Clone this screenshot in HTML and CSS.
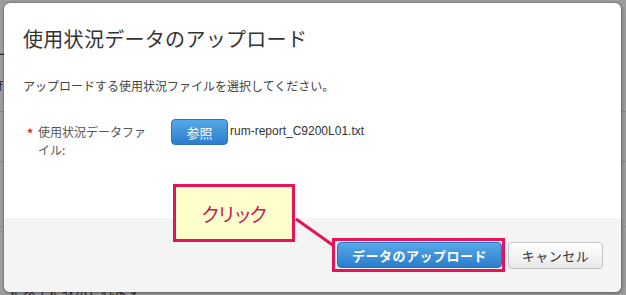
FILE: index.html
```html
<!DOCTYPE html>
<html lang="ja">
<head>
  <meta charset="UTF-8" />
  <title>使用状況データのアップロード</title>
  <link rel="stylesheet" href="styles.css">
</head>
<body>
  <div class="page">
    <div class="page-row first">
      <span class="page-text">ー</span>
      <span class="page-text">ff</span>
    </div>
    <div class="page-row"></div>
    <div class="page-row tall"></div>
    <div class="page-foot">に以下に表示されます</div>
  </div>

  <div class="modal">
    <div class="modal-body">
      <h2 class="modal-title">使用状況データのアップロード</h2>
      <p class="modal-desc">アップロードする使用状況ファイルを選択してください。</p>

      <div class="field">
        <label class="field-label">
          <span class="req">*</span>
          <span class="field-text">使用状況データファイル:</span>
        </label>
        <div class="field-input">
          <button class="btn btn-primary btn-browse">参照</button>
          <span class="file-name">rum-report_C9200L01.txt</span>
        </div>
      </div>
    </div>

    <div class="modal-footer">
      <span class="highlight">
        <button class="btn btn-primary btn-upload">データのアップロード</button>
      </span>
      <button class="btn btn-default">キャンセル</button>
    </div>

    <!-- 注釈 -->
    <svg class="callout-line" width="50" height="40" viewBox="0 0 50 40">
      <line x1="2" y1="3" x2="40" y2="30" stroke="#e5135c" stroke-width="3" />
    </svg>
    <div class="callout">クリック</div>
  </div>
</body>
</html>
```

FILE: styles.css
```css
body {
  margin: 0;
  background: #9d9d9d;
  font-family: "Noto Sans CJK JP", sans-serif;
  width: 626px;
  height: 295px;
  overflow: hidden;
  position: relative;
}
.page {
  height: 295px;
  overflow: hidden;
}
.page-row {
  height: 49px;
  border-bottom: 1px solid #8a8a8a;
  color: #2a2a2a;
  font-size: 13px;
}
.page-row.first {
  height: 112px;
  display: flex;
  flex-direction: column;
  padding-top: 38px;
  box-sizing: border-box;
  line-height: 32px;
}
.page-row.tall {
  height: 64px;
}
.page-text {
  margin-left: -6px;
}
.page-foot {
  color: #2a2a2a;
  font-size: 13px;
  line-height: 16px;
  padding: 55px 0 0 10px;
}
.modal {
  position: absolute;
  left: 4px;
  top: 3px;
  width: 617px;
  height: 289px;
  background: #fff;
  border-radius: 6px;
  box-shadow: 0 0 2px rgba(0,0,0,0.5), 1px 2px 4px rgba(0,0,0,0.25);
  display: flex;
  flex-direction: column;
  overflow: hidden;
}
.modal-body {
  height: 215px;
  padding: 22px 19px 0;
  box-sizing: border-box;
}
.modal-title {
  margin: 0;
  font-size: 20px;
  font-weight: normal;
  line-height: 28px;
  color: #333;
  letter-spacing: 0.3px;
}
.modal-desc {
  margin: 24px 0 0;
  font-size: 12px;
  line-height: 18px;
  color: #444;
}
.field {
  display: flex;
  margin-top: 25px;
  padding-left: 4px;
}
.field-label {
  display: flex;
  width: 144px;
  font-size: 12px;
  line-height: 18px;
  color: #555;
}
.req {
  color: #d42a1c;
  width: 11px;
  font-weight: bold;
  margin-top: 4px;
}
.field-text {
  width: 112px;
  margin-top: 3px;
}
.field-input {
  display: flex;
  align-items: flex-start;
  margin-top: -1px;
}
.btn {
  font-family: "Noto Sans CJK JP", sans-serif;
  font-size: 13px;
  height: 26px;
  border-radius: 4px;
  padding: 0;
  cursor: pointer;
  box-sizing: border-box;
}
.btn-primary {
  color: #fff;
  background: linear-gradient(#55a8e8, #2b7dcc);
  border: 1px solid #2f74bb;
}
.btn-browse {
  width: 57px;
}
.file-name {
  font-family: "Liberation Sans", Arial, sans-serif;
  font-size: 12px;
  color: #333;
  margin-left: 2px;
  line-height: 18px;
  margin-top: 3px;
}
.modal-footer {
  flex: 1;
  background: #f4f4f4;
  display: flex;
  justify-content: flex-end;
  align-items: flex-start;
  padding: 20px 18px 0 0;
}
.highlight {
  display: inline-flex;
  border: 3px solid #e5135c;
  padding: 1px 0 1px 2px;
}
.btn-upload {
  width: 165px;
  font-weight: bold;
  letter-spacing: 0.5px;
}
.btn-default {
  width: 95px;
  height: 27px;
  margin: 4px 0 0 3px;
  color: #333;
  background: linear-gradient(#ffffff, #e9e9e9);
  border: 1px solid #c4c4c4;
  letter-spacing: 0.5px;
}
.callout {
  position: absolute;
  left: 169px;
  top: 181px;
  width: 122px;
  height: 58px;
  box-sizing: border-box;
  border: 3px solid #e5135c;
  background: #ffffcc;
  color: #c8175a;
  font-size: 19px;
  letter-spacing: -3px;
  display: flex;
  align-items: center;
  justify-content: center;
  padding-right: 2px;
}
.callout-line {
  position: absolute;
  left: 290px;
  top: 213px;
}
```
